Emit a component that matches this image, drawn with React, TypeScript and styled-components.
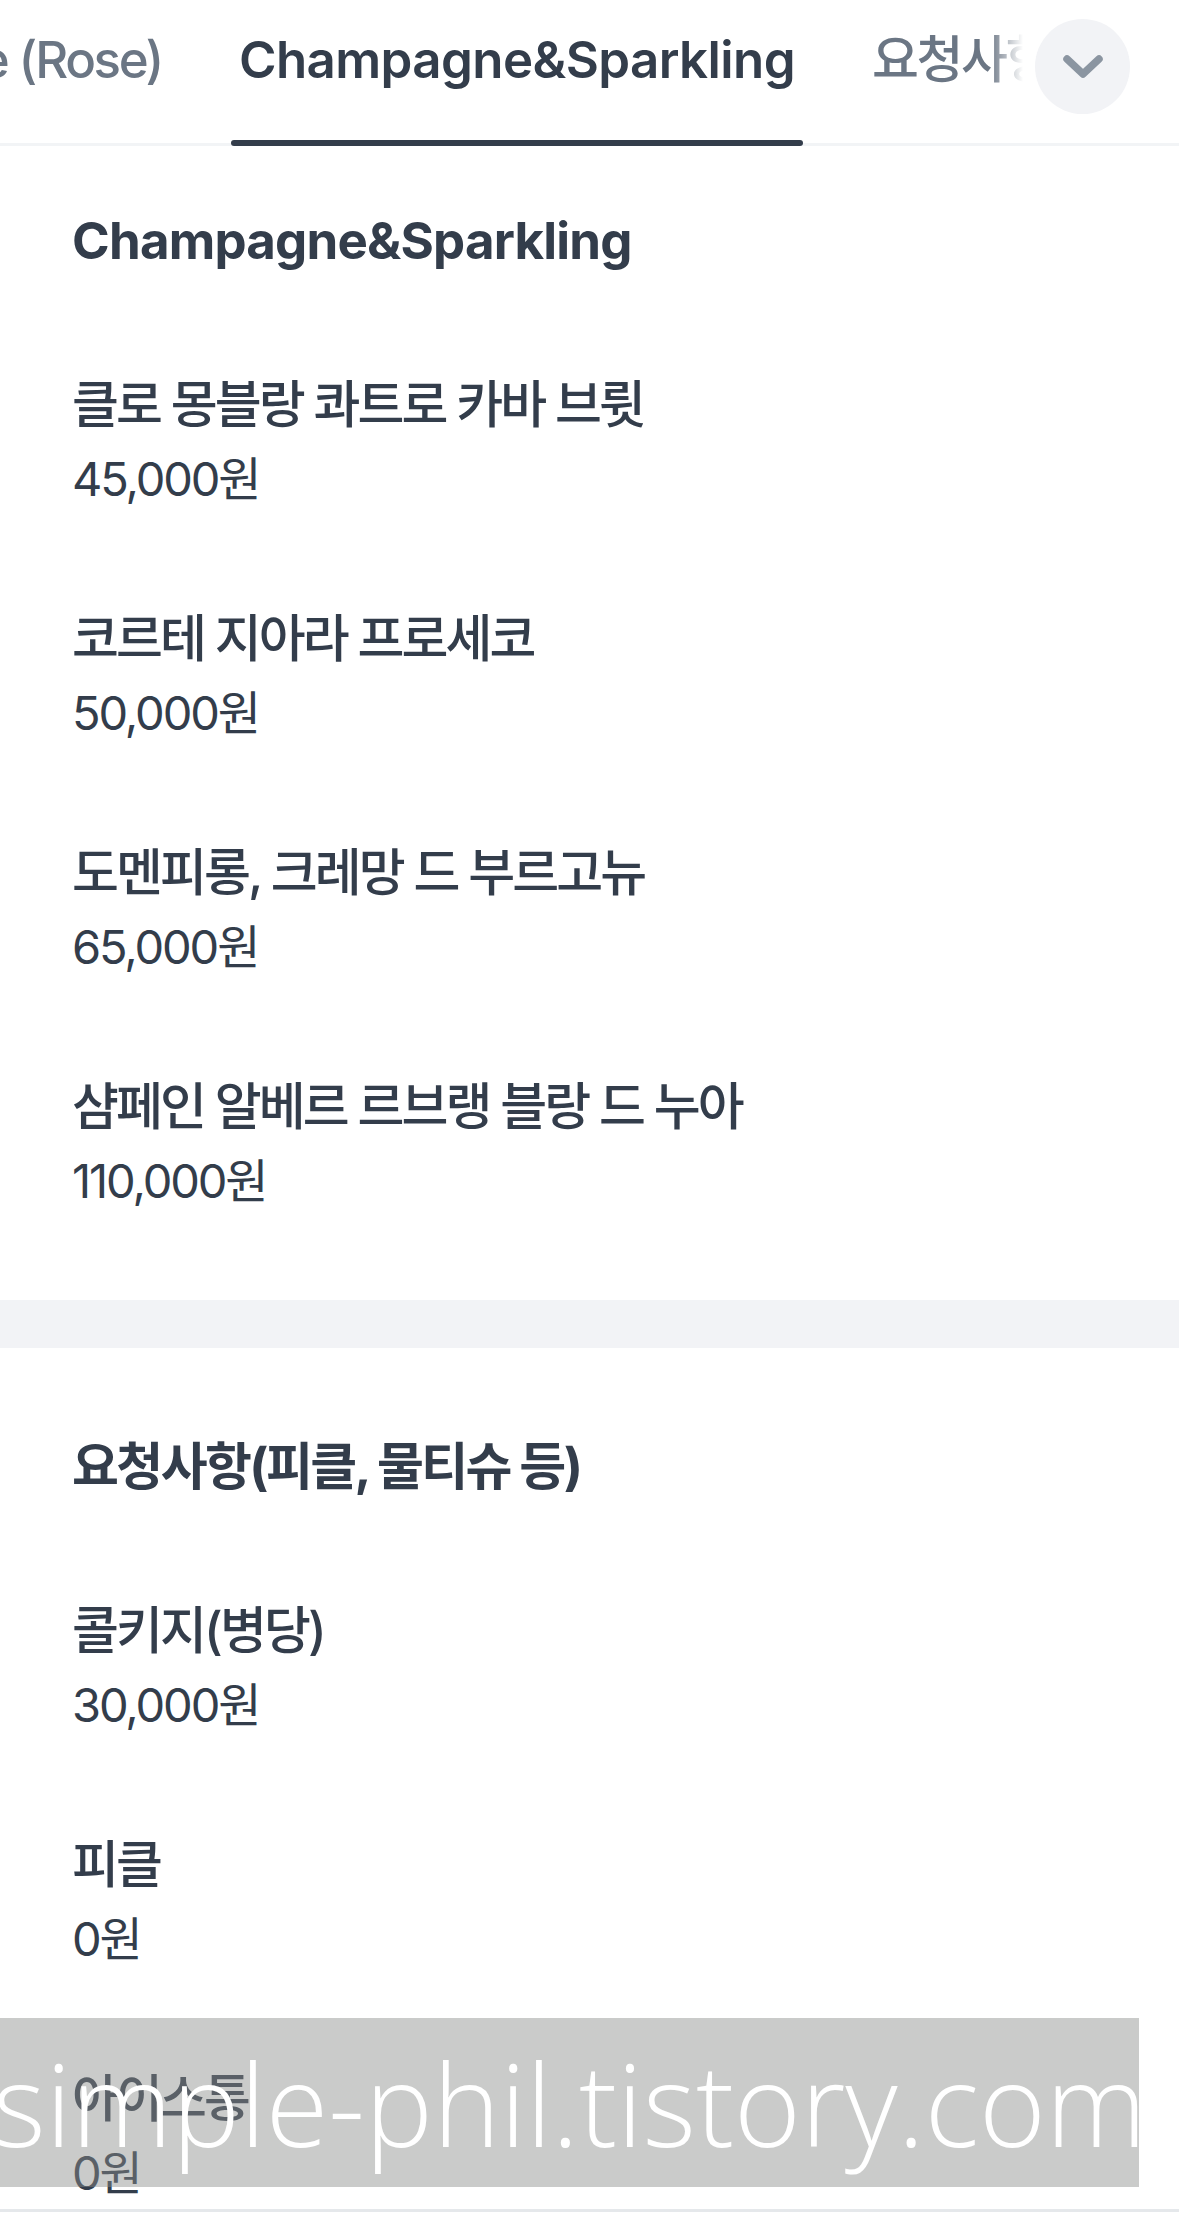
import styled, { createGlobalStyle } from "styled-components";

const GlobalStyle = createGlobalStyle`
  html, body {
    margin: 0;
    padding: 0;
    background: #ffffff;
    overflow: hidden;
  }
  body {
    font-family: Inter, "Noto Sans CJK KR", sans-serif;
    color: #333d4b;
  }
`;

const sections = [
  {
    title: "Champagne&Sparkling",
    items: [
      { name: "클로 몽블랑 콰트로 카바 브륏", price: "45,000원" },
      { name: "코르테 지아라 프로세코", price: "50,000원" },
      { name: "도멘피롱, 크레망 드 부르고뉴", price: "65,000원" },
      { name: "샴페인 알베르 르브랭 블랑 드 누아", price: "110,000원" },
    ],
  },
  {
    title: "요청사항(피클, 물티슈 등)",
    items: [
      { name: "콜키지(병당)", price: "30,000원" },
      { name: "피클", price: "0원" },
      { name: "아이스통", price: "0원" },
    ],
  },
];

const hasHangul = (s: string) => /[가-힣]/.test(s);

const Screen = styled.div`
  position: relative;
  width: 1179px;
  height: 2227px;
  display: flex;
  flex-direction: column;
  overflow: hidden;
  background: #ffffff;
`;

const TabBar = styled.div`
  position: relative;
  flex: none;
  height: 146px;
  box-shadow: inset 0 -3px 0 #f2f4f6;
  overflow: hidden;
`;

const TabTrack = styled.div`
  display: flex;
  gap: 61px;
  height: 100%;
  white-space: nowrap;
`;

const PrevClip = styled.div`
  flex: none;
  width: 170px;
  display: flex;
  justify-content: flex-end;
  overflow: hidden;
`;

const Tab = styled.div<{ $active?: boolean }>`
  position: relative;
  flex: none;
  box-sizing: border-box;
  padding: 30px 8px 0;
  height: 146px;
  font-size: 51px;
  line-height: 60px;
  letter-spacing: ${(p) => (p.$active ? "-0.6px" : "-2.4px")};
  font-weight: ${(p) => (p.$active ? 600 : 500)};
  color: ${(p) => (p.$active ? "#333d4b" : "#6b7684")};

  &::after {
    content: "";
    display: ${(p) => (p.$active ? "block" : "none")};
    position: absolute;
    left: 0;
    right: 0;
    bottom: 0;
    height: 6px;
    border-radius: 3px;
    background: #333d4b;
  }
`;

const TabFade = styled.div`
  position: absolute;
  top: 0;
  right: 0;
  bottom: 6px;
  width: 190px;
  background: linear-gradient(
    to right,
    rgba(255, 255, 255, 0) 0,
    #ffffff 34px
  );
`;

const MoreButton = styled.div`
  position: absolute;
  top: 19px;
  right: 49px;
  width: 95px;
  height: 95px;
  border-radius: 50%;
  background: #f2f3f6;
  display: flex;
  align-items: center;
  justify-content: center;
`;

const Content = styled.div`
  flex: 1;
  overflow: hidden;
`;

const Section = styled.section<{ $top: number }>`
  padding: ${(p) => p.$top}px 72px 38px;
`;

const SectionTitle = styled.h2<{ $ko?: boolean }>`
  margin: 0 0 49px;
  font-size: 51px;
  line-height: 72px;
  font-weight: 700;
  letter-spacing: ${(p) => (p.$ko ? "-2.6px" : "-0.8px")};
  color: #333d4b;
`;

const Item = styled.div`
  padding: 43px 0;
`;

const ItemName = styled.div`
  font-size: 51px;
  line-height: 72px;
  font-weight: 500;
  letter-spacing: -2.9px;
  color: #333d4b;
`;

const ItemPrice = styled.div`
  font-size: 47px;
  line-height: 76px;
  font-weight: 400;
  letter-spacing: -2.1px;
  color: #333d4b;
`;

const Divider = styled.div`
  height: 48px;
  background: #f2f3f6;
`;

const BottomBar = styled.div`
  flex: none;
  height: 18px;
  box-sizing: border-box;
  border-top: 3px solid #e5e8eb;
  background: #ffffff;
`;

const Watermark = styled.div`
  position: absolute;
  left: 0;
  top: 2018px;
  width: 1139px;
  height: 169px;
  background: rgba(138, 140, 138, 0.45);
  display: flex;
  align-items: center;
  justify-content: center;
  overflow: hidden;
  font-family: "Open Sans", "DejaVu Sans", sans-serif;
  font-weight: 300;
  font-size: 114px;
  line-height: 1;
  color: #ffffff;
  white-space: nowrap;
`;

const Chevron = () => (
  <svg width="44" height="28" viewBox="0 0 44 28" fill="none">
    <polyline
      points="6,6 22,21 38,6"
      stroke="#8b95a1"
      strokeWidth="7.5"
      strokeLinecap="round"
      strokeLinejoin="round"
    />
  </svg>
);

export default function App() {
  return (
    <>
      <GlobalStyle />
      <Screen>
        <TabBar>
          <TabTrack>
            <PrevClip>
              <Tab>Wine (Rose)</Tab>
            </PrevClip>
            <Tab $active>Champagne&Sparkling</Tab>
            <Tab>요청사항(피클, 물티슈 등)</Tab>
          </TabTrack>
          <TabFade>
            <MoreButton>
              <Chevron />
            </MoreButton>
          </TabFade>
        </TabBar>
        <Content>
          {sections.map((s, i) => (
            <div key={s.title}>
              {i > 0 && <Divider />}
              <Section $top={i === 0 ? 59 : 83}>
                <SectionTitle $ko={hasHangul(s.title)}>{s.title}</SectionTitle>
                {s.items.map((it) => (
                  <Item key={it.name}>
                    <ItemName>{it.name}</ItemName>
                    <ItemPrice>{it.price}</ItemPrice>
                  </Item>
                ))}
              </Section>
            </div>
          ))}
        </Content>
        <BottomBar />
        <Watermark>simple-phil.tistory.com</Watermark>
      </Screen>
    </>
  );
}
